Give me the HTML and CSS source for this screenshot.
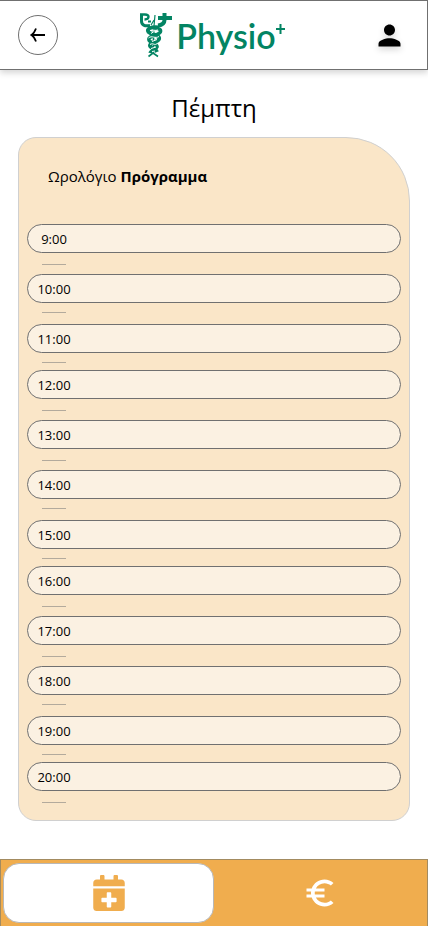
FILE: index.html
```html
<!DOCTYPE html>
<html lang="el">
<head>
<meta charset="utf-8">
<meta name="viewport" content="width=device-width, initial-scale=1">
<title>Physio+</title>
<link rel="stylesheet" href="styles.css">
</head>
<body>
<header class="topbar">
  <button class="back" type="button" aria-label="Πίσω">
    <svg width="16" height="16" viewBox="0 0 16 16" fill="none" stroke="#000" stroke-width="1.800"><path d="M15 8H2M6 1.500C5 4 4 6.500 1.500 8C4 9.500 5 12 6 14.500"/></svg>
  </button>
  <a class="brand" href="#">
    <svg class="brand-mark" width="34" height="46" viewBox="0 0 34 46" fill="none" stroke="#038463" aria-hidden="true">
      <path stroke-width="3" d="M2.500 2V9C2.500 13 5.500 14.500 11 13.500"/>
      <path stroke-width="2.400" d="M1 2.500H6C11 2.500 10.500 7.500 5.500 7.500"/>
      <path stroke-width="2" d="M9 9.500H12"/>
      <path stroke-width="1.200" d="M16 3L15 14M12 13L15 8"/>
      <path stroke-width="4" d="M25.500 1V8C25.500 11.500 23 13 19 13.500M19 6H33"/>
      <path stroke-width="4" d="M20 15.500C12 14.500 7 17 9.500 20C12 23 21 22.500 20 27C19 30.500 11 30 11 33.500C11 36 17 37 18 40"/>
      <path stroke-width="3.600" d="M14 17C20 15.500 23.500 18 20.500 21C17 24 9 24 10 28C11 31.500 19 31.500 18 35C17 38 12 38 11 41"/>
      <path stroke-width="1.600" d="M14.500 18V42M9.500 44.500L14 41L19 44.500"/>
      <path stroke="#fff" stroke-width="1" d="M11 18.500C14 17.500 16 19 19 18M12 21.500L15 19.500M9.500 26C13 23 16 27 20 24.500M13 29.500L18 27.500M11 32.500C14 30.500 16 34 18 31.500M12 36.500L17 35M13 39.500L16 39"/>
    </svg>
    <span class="brand-name">Physio</span>
    <svg class="brand-plus" width="9" height="10" viewBox="0 0 9 10" aria-label="+"><path fill="#038463" d="M3.500 0h2v4H9v2H5.500v4h-2V6H0V4h3.500z"/></svg>
  </a>
  <button class="profile" type="button" aria-label="Προφίλ">
    <svg width="33" height="33" viewBox="0 0 24 24"><path d="M12 12c2.210 0 4-1.790 4-4s-1.790-4-4-4-4 1.790-4 4 1.790 4 4 4zm0 2c-2.670 0-8 1.340-8 4v2h16v-2c0-2.660-5.330-4-8-4z"/></svg>
  </button>
</header>
<main class="content">
  <h1 class="day">Πέμπτη</h1>
  <section class="panel">
    <h2 class="panel-title">Ωρολόγιο <b>Πρόγραμμα</b></h2>
    <ul class="slots">
      <li class="slot"><button class="slot-button" type="button"><span class="time">9:00</span></button></li>
      <li class="slot"><button class="slot-button" type="button"><span class="time">10:00</span></button></li>
      <li class="slot"><button class="slot-button" type="button"><span class="time">11:00</span></button></li>
      <li class="slot"><button class="slot-button" type="button"><span class="time">12:00</span></button></li>
      <li class="slot"><button class="slot-button" type="button"><span class="time">13:00</span></button></li>
      <li class="slot"><button class="slot-button" type="button"><span class="time">14:00</span></button></li>
      <li class="slot"><button class="slot-button" type="button"><span class="time">15:00</span></button></li>
      <li class="slot"><button class="slot-button" type="button"><span class="time">16:00</span></button></li>
      <li class="slot"><button class="slot-button" type="button"><span class="time">17:00</span></button></li>
      <li class="slot"><button class="slot-button" type="button"><span class="time">18:00</span></button></li>
      <li class="slot"><button class="slot-button" type="button"><span class="time">19:00</span></button></li>
      <li class="slot"><button class="slot-button" type="button"><span class="time">20:00</span></button></li>
    </ul>
  </section>
</main>
<nav class="tabs">
  <a class="tab tab-active" href="#" aria-label="Ραντεβού">
    <svg width="32" height="36" viewBox="0 0 448 512" fill="#f0ad4e"><path d="M0 464c0 26.500 21.500 48 48 48h352c26.500 0 48-21.500 48-48V192H0v272zm116-128c0-8 6-14 14-14h62v-62c0-8 6-14 14-14h36c8 0 14 6 14 14v62h62c8 0 14 6 14 14v36c0 8-6 14-14 14h-62v62c0 8-6 14-14 14h-36c-8 0-14-6-14-14v-62h-62c-8 0-14-6-14-14v-36zM400 64h-48V16c0-8.800-7.200-16-16-16h-32c-8.800 0-16 7.200-16 16v48H160V16c0-8.800-7.200-16-16-16h-32c-8.800 0-16 7.200-16 16v48H48C21.500 64 0 85.500 0 112v48h448v-48c0-26.500-21.500-48-48-48z"/></svg>
  </a>
  <a class="tab" href="#" aria-label="Πληρωμές">
    <svg width="36" height="36" viewBox="0 0 24 24" fill="#fff"><path d="M15 18.500c-2.510 0-4.680-1.420-5.760-3.500H15v-2H8.580c-.05-.33-.08-.66-.08-1s.03-.67.08-1H15V9H9.240C10.320 6.920 12.500 5.500 15 5.500c1.610 0 3.090.59 4.230 1.570L21 5.300C19.410 3.870 17.300 3 15 3c-3.920 0-7.240 2.510-8.480 6H3v2h3.060c-.04.33-.06.66-.06 1s.02.67.06 1H3v2h3.520c1.240 3.490 4.560 6 8.480 6 2.310 0 4.410-.87 6-2.300l-1.780-1.770c-1.130.98-2.600 1.570-4.220 1.570z"/></svg>
  </a>
</nav>
</body>
</html>
```

FILE: styles.css
```css
* {
  box-sizing: border-box;
}

body {
  display: flex;
  flex-direction: column;
  min-height: 100vh;
  margin: 0;
  background: #fff;
  color: #000;
  font-family: "Open Sans", "Noto Sans", sans-serif;
}

button {
  padding: 0;
  border: 0;
  background: none;
  color: inherit;
  font: inherit;
  cursor: pointer;
}

svg {
  display: block;
}

.topbar {
  display: grid;
  grid-template-columns: 1fr auto 1fr;
  align-items: center;
  height: 70px;
  padding: 0 21px 0 18px;
  border: 1px solid #707070;
  border-left: 0;
  background: #fff;
  box-shadow: 0 3px 6px rgba(0, 0, 0, 0.16);
}

.back {
  display: grid;
  place-items: center;
  width: 40px;
  height: 40px;
  border: 1px solid #707070;
  border-radius: 50%;
}

.brand {
  display: flex;
  align-items: flex-start;
  height: 46px;
  color: #038463;
  text-decoration: none;
}

.brand-name {
  margin-left: 3px;
  font-family: Lato, sans-serif;
  font-size: 34px;
  font-weight: 600;
  line-height: 48px;
}

.brand-plus {
  margin-top: 12px;
}

.profile {
  justify-self: end;
  filter: drop-shadow(0 3px 3px rgba(0, 0, 0, 0.16));
}

.content {
  flex: 1;
  padding: 20px 18px 38px;
}

.day {
  margin: 0 0 11px;
  font-size: 24px;
  font-weight: 400;
  line-height: 36px;
  text-align: center;
}

.panel {
  padding: 28px 8px 8px;
  border: 1px solid #d0d0d0;
  border-radius: 18px 64px 18px 18px;
  background: #fae6c8;
}

.panel-title {
  margin: 0 0 38px;
  padding-left: 21px;
  font-size: 15px;
  font-weight: 400;
  line-height: 20px;
}

.slots {
  margin: 0;
  padding: 0;
  list-style: none;
}

.slot {
  height: 50px;
}

.slot:nth-child(4n + 3) {
  height: 46px;
}

.slot-button {
  display: flex;
  align-items: center;
  width: 100%;
  height: 29px;
  border: 1px solid #707070;
  border-radius: 15px;
  background: #fbf1e2;
}

.time {
  width: 52px;
  font-size: 13px;
  line-height: 20px;
  text-align: center;
}

.slot::after {
  content: "";
  display: block;
  width: 24px;
  height: 1px;
  margin: 9px 0 0 15px;
  background: #b3aa9c;
}

.slot:nth-child(4n)::after,
.slot:nth-child(4n + 1)::after {
  margin-top: 11px;
}

.tabs {
  display: grid;
  grid-template-columns: 1fr 1fr;
  height: 67px;
  padding: 3px 2px;
  border: 1px solid #a38b60;
  border-bottom: 0;
  background: #f0ad4e;
}

.tab {
  display: grid;
  place-items: center;
  height: 60px;
  border: 1px solid transparent;
  border-radius: 16px;
}

.tab-active {
  border-color: #b8b8b8;
  background: #fff;
}
```
